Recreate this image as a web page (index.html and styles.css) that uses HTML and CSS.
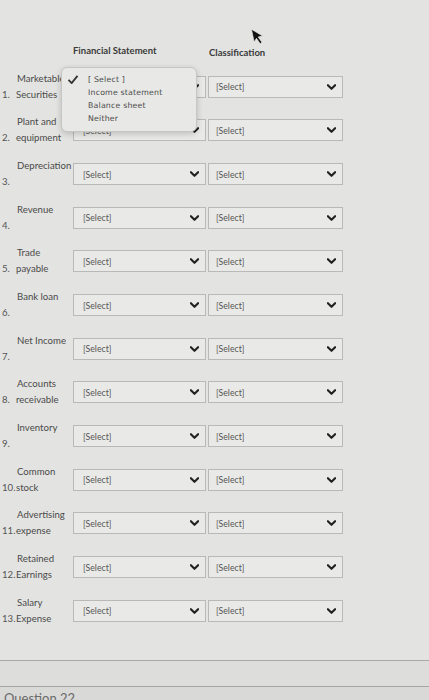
FILE: index.html
```html
<!DOCTYPE html>
<html>
<head>
<meta charset="utf-8">
<link rel="stylesheet" href="styles.css">
</head>
<body>
<div class="page">
  <div class="head">
    <div class="h-spacer"></div>
    <div class="h-fs">Financial Statement</div>
    <div class="h-cl">Classification</div>
  </div>

  <div class="rows">
    <div class="row">
      <div class="label"><span class="l1">Marketable</span><span class="l2"><span class="num">1.</span>Securities</span></div>
      <div class="sel"><span>[Select]</span><svg class="chev" viewBox="0 0 10 6"><path d="M1 1 L5 5 L9 1"/></svg></div>
      <div class="sel wide"><span>[Select]</span><svg class="chev" viewBox="0 0 10 6"><path d="M1 1 L5 5 L9 1"/></svg></div>
    </div>
    <div class="row">
      <div class="label"><span class="l1">Plant and</span><span class="l2"><span class="num">2.</span>equipment</span></div>
      <div class="sel"><span>[Select]</span><svg class="chev" viewBox="0 0 10 6"><path d="M1 1 L5 5 L9 1"/></svg></div>
      <div class="sel wide"><span>[Select]</span><svg class="chev" viewBox="0 0 10 6"><path d="M1 1 L5 5 L9 1"/></svg></div>
    </div>
    <div class="row">
      <div class="label"><span class="l1">Depreciation</span><span class="l2"><span class="num">3.</span></span></div>
      <div class="sel"><span>[Select]</span><svg class="chev" viewBox="0 0 10 6"><path d="M1 1 L5 5 L9 1"/></svg></div>
      <div class="sel wide"><span>[Select]</span><svg class="chev" viewBox="0 0 10 6"><path d="M1 1 L5 5 L9 1"/></svg></div>
    </div>
    <div class="row">
      <div class="label"><span class="l1">Revenue</span><span class="l2"><span class="num">4.</span></span></div>
      <div class="sel"><span>[Select]</span><svg class="chev" viewBox="0 0 10 6"><path d="M1 1 L5 5 L9 1"/></svg></div>
      <div class="sel wide"><span>[Select]</span><svg class="chev" viewBox="0 0 10 6"><path d="M1 1 L5 5 L9 1"/></svg></div>
    </div>
    <div class="row">
      <div class="label"><span class="l1">Trade</span><span class="l2"><span class="num">5.</span>payable</span></div>
      <div class="sel"><span>[Select]</span><svg class="chev" viewBox="0 0 10 6"><path d="M1 1 L5 5 L9 1"/></svg></div>
      <div class="sel wide"><span>[Select]</span><svg class="chev" viewBox="0 0 10 6"><path d="M1 1 L5 5 L9 1"/></svg></div>
    </div>
    <div class="row">
      <div class="label"><span class="l1">Bank loan</span><span class="l2"><span class="num">6.</span></span></div>
      <div class="sel"><span>[Select]</span><svg class="chev" viewBox="0 0 10 6"><path d="M1 1 L5 5 L9 1"/></svg></div>
      <div class="sel wide"><span>[Select]</span><svg class="chev" viewBox="0 0 10 6"><path d="M1 1 L5 5 L9 1"/></svg></div>
    </div>
    <div class="row">
      <div class="label"><span class="l1">Net Income</span><span class="l2"><span class="num">7.</span></span></div>
      <div class="sel"><span>[Select]</span><svg class="chev" viewBox="0 0 10 6"><path d="M1 1 L5 5 L9 1"/></svg></div>
      <div class="sel wide"><span>[Select]</span><svg class="chev" viewBox="0 0 10 6"><path d="M1 1 L5 5 L9 1"/></svg></div>
    </div>
    <div class="row">
      <div class="label"><span class="l1">Accounts</span><span class="l2"><span class="num">8.</span>receivable</span></div>
      <div class="sel"><span>[Select]</span><svg class="chev" viewBox="0 0 10 6"><path d="M1 1 L5 5 L9 1"/></svg></div>
      <div class="sel wide"><span>[Select]</span><svg class="chev" viewBox="0 0 10 6"><path d="M1 1 L5 5 L9 1"/></svg></div>
    </div>
    <div class="row">
      <div class="label"><span class="l1">Inventory</span><span class="l2"><span class="num">9.</span></span></div>
      <div class="sel"><span>[Select]</span><svg class="chev" viewBox="0 0 10 6"><path d="M1 1 L5 5 L9 1"/></svg></div>
      <div class="sel wide"><span>[Select]</span><svg class="chev" viewBox="0 0 10 6"><path d="M1 1 L5 5 L9 1"/></svg></div>
    </div>
    <div class="row">
      <div class="label"><span class="l1">Common</span><span class="l2"><span class="num">10.</span>stock</span></div>
      <div class="sel"><span>[Select]</span><svg class="chev" viewBox="0 0 10 6"><path d="M1 1 L5 5 L9 1"/></svg></div>
      <div class="sel wide"><span>[Select]</span><svg class="chev" viewBox="0 0 10 6"><path d="M1 1 L5 5 L9 1"/></svg></div>
    </div>
    <div class="row">
      <div class="label"><span class="l1">Advertising</span><span class="l2"><span class="num">11.</span>expense</span></div>
      <div class="sel"><span>[Select]</span><svg class="chev" viewBox="0 0 10 6"><path d="M1 1 L5 5 L9 1"/></svg></div>
      <div class="sel wide"><span>[Select]</span><svg class="chev" viewBox="0 0 10 6"><path d="M1 1 L5 5 L9 1"/></svg></div>
    </div>
    <div class="row">
      <div class="label"><span class="l1">Retained</span><span class="l2"><span class="num">12.</span>Earnings</span></div>
      <div class="sel"><span>[Select]</span><svg class="chev" viewBox="0 0 10 6"><path d="M1 1 L5 5 L9 1"/></svg></div>
      <div class="sel wide"><span>[Select]</span><svg class="chev" viewBox="0 0 10 6"><path d="M1 1 L5 5 L9 1"/></svg></div>
    </div>
    <div class="row">
      <div class="label"><span class="l1">Salary</span><span class="l2"><span class="num">13.</span>Expense</span></div>
      <div class="sel"><span>[Select]</span><svg class="chev" viewBox="0 0 10 6"><path d="M1 1 L5 5 L9 1"/></svg></div>
      <div class="sel wide"><span>[Select]</span><svg class="chev" viewBox="0 0 10 6"><path d="M1 1 L5 5 L9 1"/></svg></div>
    </div>
  </div>

  <div class="band"></div>
  <div class="question">Question 22</div>

  <div class="menu">
    <div class="opt checked"><svg class="check" viewBox="0 0 12 10"><path d="M1 5.5 L4.5 9 L11 1"/></svg>[ Select ]</div>
    <div class="opt">Income statement</div>
    <div class="opt">Balance sheet</div>
    <div class="opt">Neither</div>
  </div>

  <svg class="cursor" viewBox="0 0 12 18"><path d="M1 1 L1 14 L4 11 L6.5 17 L8.5 16 L6 10 L10.5 10 Z"/></svg>
</div>
</body>
</html>
```

FILE: styles.css
```css
html, body {
  margin: 0;
  padding: 0;
}

body {
  background: #e3e3e1;
  font-family: Lato, "Open Sans", "Liberation Sans", sans-serif;
  color: #4d4d4d;
  width: 429px;
  height: 700px;
  overflow: hidden;
}

.page {
  position: relative;
  height: 700px;
}

.head {
  display: flex;
  height: 65px;
  box-sizing: border-box;
  padding-top: 44px;
  font-size: 9.5px;
  font-weight: 700;
  color: #3a3a3a;
  line-height: 14px;
}

.h-spacer {
  width: 73px;
}

.h-fs {
  width: 136px;
}

.h-cl {
  padding-top: 2px;
}

.rows {
  display: flex;
  flex-direction: column;
}

.row {
  display: flex;
  align-items: center;
  height: 43.67px;
  padding-left: 2px;
}

.label {
  width: 71px;
  display: flex;
  flex-direction: column;
  font-size: 9.6px;
  line-height: 16px;
  color: #4a4a4a;
  white-space: nowrap;
  overflow: hidden;
}

.l1 {
  padding-left: 15px;
  display: block;
  height: 16px;
}

.l2 {
  display: flex;
  height: 16px;
}

.num {
  width: 14px;
  color: #555;
}

.sel {
  width: 133px;
  height: 22px;
  box-sizing: border-box;
  border: 1px solid #b9b9b7;
  background: #e9e9e7;
  display: flex;
  align-items: center;
  justify-content: space-between;
  padding: 0 6px 0 9px;
  font-size: 8.7px;
  color: #555;
}

.sel.wide {
  width: 135px;
  margin-left: 2px;
  padding-left: 7px;
}

.chev {
  width: 9px;
  height: 6px;
  fill: none;
  stroke: #222;
  stroke-width: 2.4;
  stroke-linecap: round;
  stroke-linejoin: round;
}

.band {
  margin-top: 27px;
  height: 25px;
  border-top: 1px solid #a9a9a7;
  border-bottom: 1px solid #a6a6a4;
  background: #dddddb;
}

.question {
  background: #d9d9d7;
  padding: 3px 0 0 4px;
  font-size: 13px;
  line-height: 16px;
  color: #6a6a6a;
  height: 40px;
}

.menu {
  position: absolute;
  left: 61px;
  top: 67px;
  width: 136px;
  height: 65px;
  box-sizing: border-box;
  border: 1px solid #c6c6c4;
  border-radius: 6px;
  background: #e8e8e6;
  box-shadow: 0 2px 6px rgba(0, 0, 0, 0.18);
  padding: 5px 0 0 26px;
  font-family: "DejaVu Sans", sans-serif;
  font-size: 7.8px;
  color: #4a4a4a;
  letter-spacing: 0.2px;
}

.opt {
  position: relative;
  height: 13px;
  line-height: 13px;
}

.check {
  position: absolute;
  left: -21px;
  top: 2px;
  width: 12px;
  height: 9px;
  fill: none;
  stroke: #333;
  stroke-width: 2;
}

.cursor {
  position: absolute;
  left: 252px;
  top: 27px;
  width: 12px;
  height: 18px;
  fill: #111;
  stroke: #eee;
  stroke-width: 0.6;
  transform: rotate(-12deg);
}
```
